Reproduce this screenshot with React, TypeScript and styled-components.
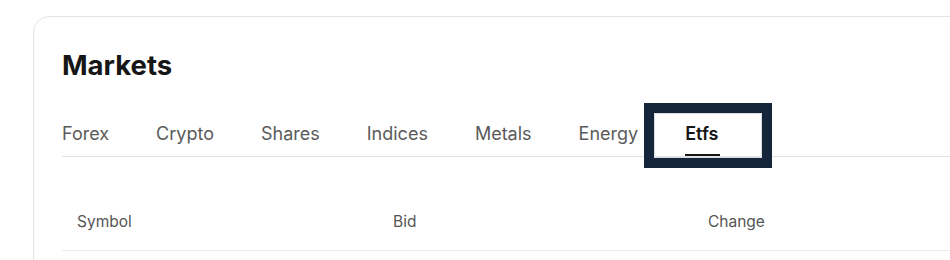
import React, { useState } from "react";
import styled, { createGlobalStyle } from "styled-components";

const tabs = ["Forex", "Crypto", "Shares", "Indices", "Metals", "Energy", "Etfs"];
const columns = ["Symbol", "Bid", "Change"];

const GlobalStyle = createGlobalStyle`
  body {
    margin: 0;
    background: #ffffff;
    font-family: Inter, "Noto Sans", sans-serif;
    color: #1a1a1a;
  }
`;

const Page = styled.div`
  padding: 16px 0 0 33px;
  overflow: hidden;
  height: 260px;
  box-sizing: border-box;
`;

const Card = styled.section`
  width: 1000px;
  border: 1px solid #e4e4e4;
  border-radius: 16px;
  padding: 30px 28px 0 28px;
  box-sizing: border-box;
  min-height: 300px;
`;

const Title = styled.h2`
  margin: 0;
  font-size: 27.5px;
  font-weight: 700;
  line-height: 36px;
  color: #161616;
`;

const TabBar = styled.div`
  display: flex;
  gap: 47px;
  margin-top: 39px;
  border-bottom: 1px solid #e4e4e4;
`;

const Tab = styled.button<{ $active: boolean }>`
  position: relative;
  background: none;
  border: none;
  padding: 0 0 10px;
  font-family: inherit;
  font-size: 18px;
  line-height: 24px;
  font-weight: ${(p) => (p.$active ? 600 : 400)};
  color: ${(p) => (p.$active ? "#161616" : "#5a5a5a")};
  cursor: pointer;

  &::before {
    content: "";
    display: ${(p) => (p.$active ? "block" : "none")};
    position: absolute;
    left: 0;
    right: -2px;
    bottom: 0;
    height: 2px;
    background: #161616;
  }

  &::after {
    content: "";
    display: ${(p) => (p.$active ? "block" : "none")};
    position: absolute;
    left: -41px;
    right: -54px;
    top: -19px;
    bottom: -12px;
    border: 10px solid #15263a;
    box-shadow: inset 0 0 0 1px #d8dde3;
  }
`;

const Table = styled.div`
  margin-top: 35px;
`;

const HeaderRow = styled.div`
  display: grid;
  grid-template-columns: 316px 315px 316px;
  border-bottom: 1px solid #ececec;
  height: 58px;
  align-items: center;
`;

const HeaderCell = styled.div`
  padding-left: 15px;
  font-size: 15.5px;
  color: #555555;
`;

export default function App() {
  const [active, setActive] = useState(6);
  return (
    <>
      <GlobalStyle />
      <Page>
        <Card>
          <Title>Markets</Title>
          <TabBar>
            {tabs.map((t, i) => (
              <Tab key={t} $active={active === i} onClick={() => setActive(i)}>
                {t}
              </Tab>
            ))}
          </TabBar>
          <Table>
            <HeaderRow>
              {columns.map((c) => (
                <HeaderCell key={c}>{c}</HeaderCell>
              ))}
            </HeaderRow>
          </Table>
        </Card>
      </Page>
    </>
  );
}
